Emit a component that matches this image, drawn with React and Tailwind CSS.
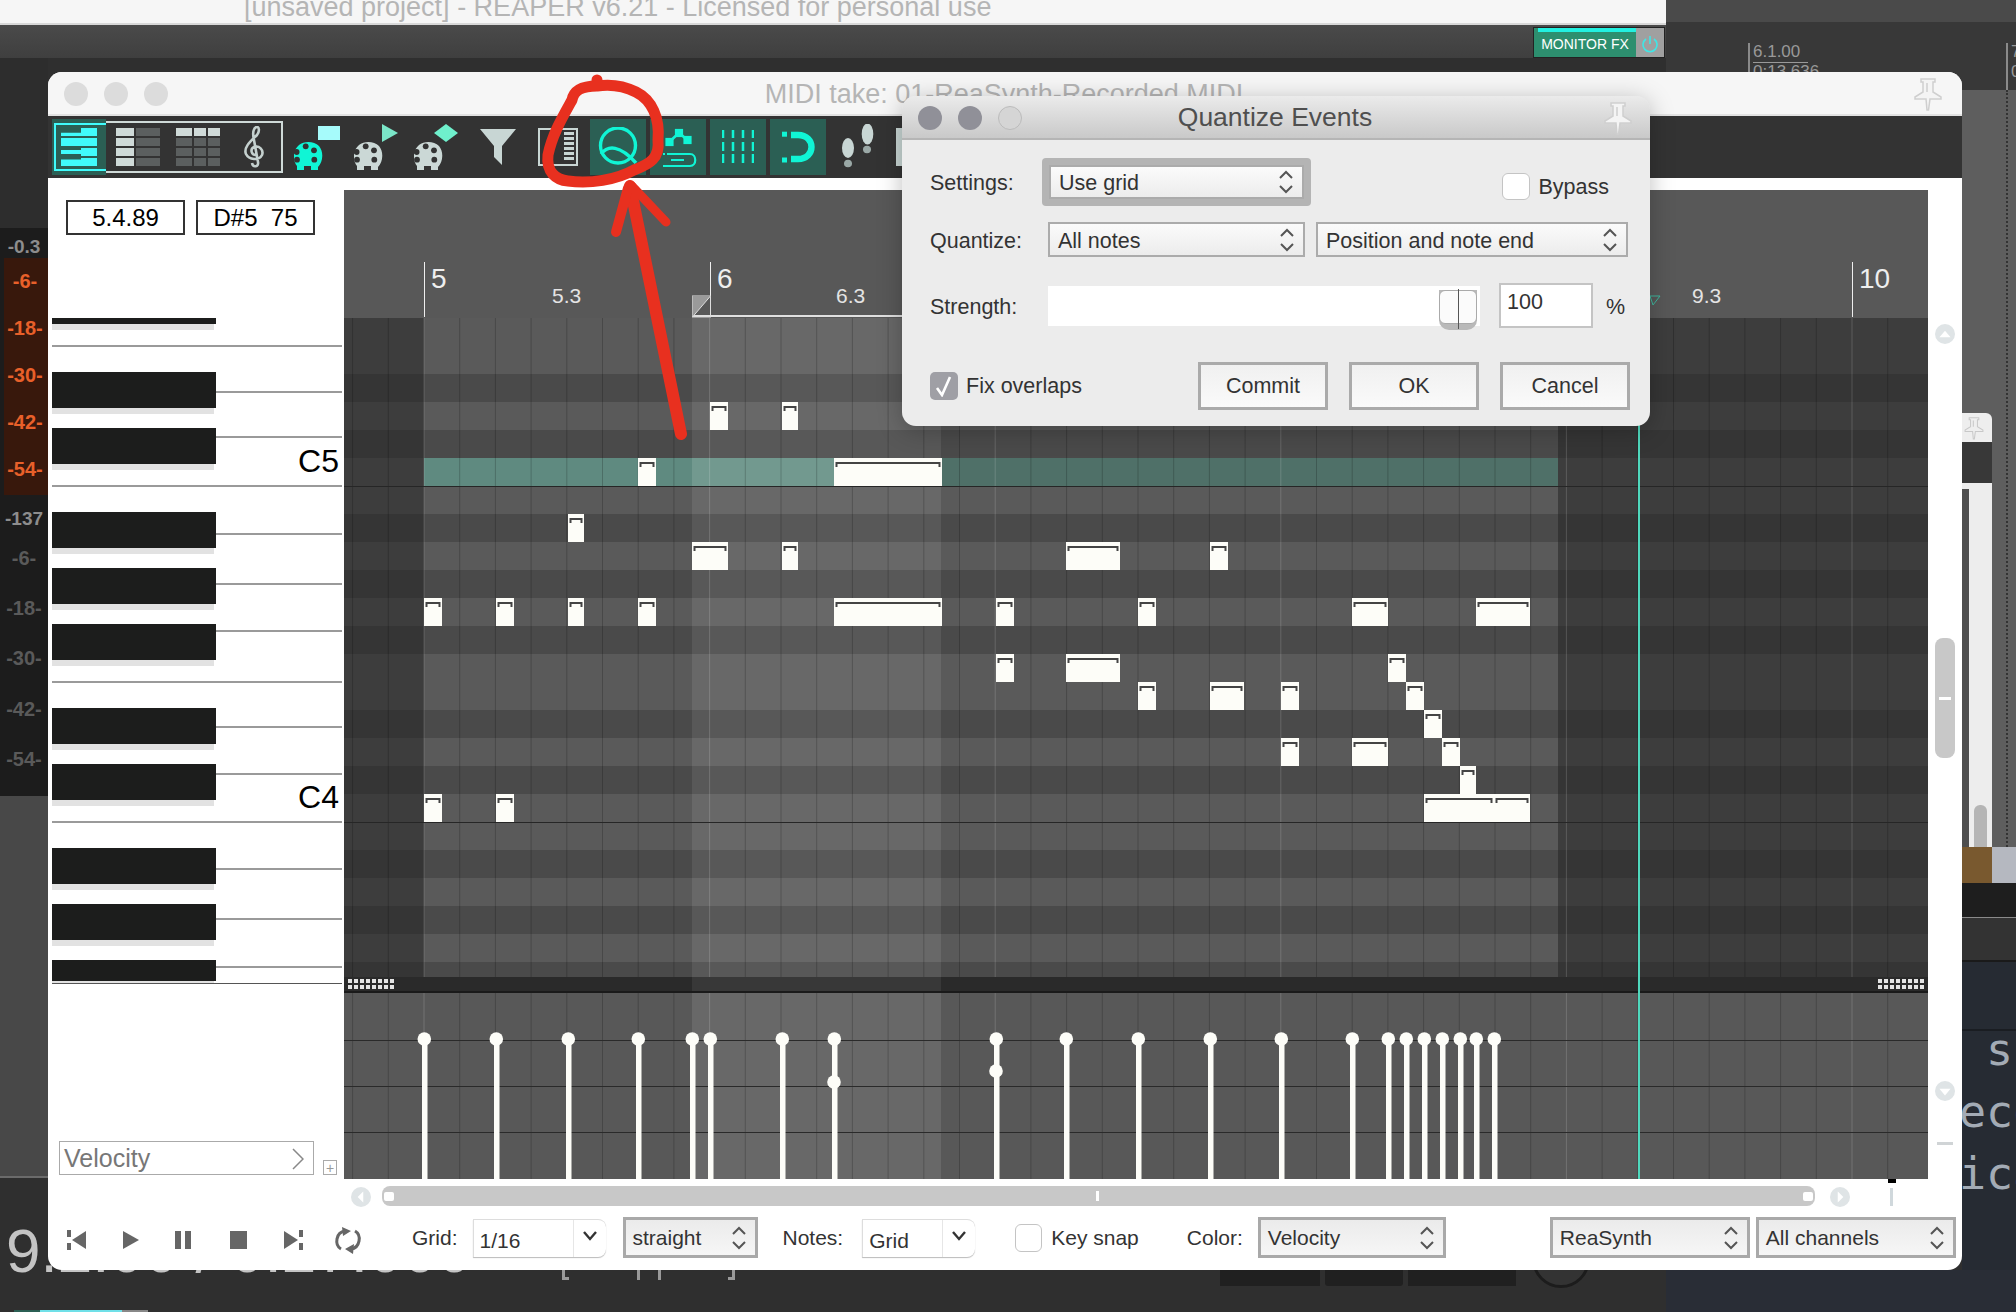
const CYAN = "#10f5d5";

// piano roll data, all in px inside the roll
const ROLL_W = 1584;
const GRID_H = 659;
const LANE_H = 186;
const X0 = 80; // bar 5
const STEP = 35.7;
const SEL_A = 348;
const SEL_B = 597;
const ITEM_END = 1214;
const DARK_ROWS = [374, 430, 514, 570, 626, 710, 766, 850, 906, 962];
const vLines = Array.from({ length: 44 }, (_, i) => X0 - 2 * STEP + i * STEP);

const NOTES = [
  [402, 710, 728], [402, 782, 798],
  [458, 638, 656], [458, 834, 942],
  [514, 568, 584],
  [542, 692, 728], [542, 782, 798], [542, 1066, 1120], [542, 1210, 1228],
  [598, 424, 442], [598, 496, 514], [598, 568, 584], [598, 638, 656], [598, 834, 942],
  [598, 996, 1014], [598, 1138, 1156], [598, 1352, 1388], [598, 1476, 1530],
  [654, 996, 1014], [654, 1066, 1120], [654, 1388, 1406],
  [682, 1138, 1156], [682, 1210, 1244], [682, 1281, 1299], [682, 1406, 1424],
  [710, 1424, 1442],
  [738, 1281, 1299], [738, 1352, 1388], [738, 1442, 1460],
  [766, 1460, 1476],
  [794, 424, 442], [794, 496, 514], [794, 1424, 1494], [794, 1494, 1530],
];

const STEMS = [424, 496, 568, 638, 692, 710, 782, 834, 996, 1066, 1138, 1210, 1281, 1352, 1388, 1406, 1424, 1442, 1460, 1476, 1494];

const BLACK_KEYS = [
  [318, 6], [372, 36], [428, 36], [512, 36], [568, 36], [624, 36], [708, 36], [764, 36], [848, 36], [904, 36], [960, 21],
];
const KEY_LINES = [
  [345, true], [391, false], [436, false], [485, true], [533, false], [583, false], [630, false],
  [681, true], [726, false], [773, false], [821, true], [868, false], [918, false], [966, false],
];

function Chevrons({ className = "" }) {
  return (
    <svg width="16" height="26" viewBox="0 0 16 26" className={className} fill="none" stroke="#555" strokeWidth="2">
      <path d="M2 9 L8 3 L14 9" />
      <path d="M2 17 L8 23 L14 17" />
    </svg>
  );
}

function Select({ label, className = "" }) {
  return (
    <div className={`flex items-center justify-between border-[2px] border-[#ababab] bg-gradient-to-b from-[#fbfbfb] to-[#ececec] text-[21.5px] text-[#333] pl-[8px] pr-[8px] ${className}`}>
      <span className="pt-[3px]">{label}</span>
      <Chevrons />
    </div>
  );
}

function BarSelect({ label, className = "" }) {
  return (
    <div className={`flex items-center justify-between border-[3px] border-[#a9a9a9] bg-gradient-to-b from-[#ebebeb] to-[#f6f6f6] text-[21px] text-[#333] pl-[7px] pr-[8px] ${className}`}>
      <span>{label}</span>
      <Chevrons />
    </div>
  );
}

function DialogButton({ children }) {
  return (
    <div className="w-[130px] h-[48px] flex items-center justify-center border-[3px] border-[#aaaaaa] bg-gradient-to-b from-[#f0f0f0] to-[#fafafa] text-[21.5px] text-[#333]">
      {children}
    </div>
  );
}

function Pin({ className = "", color = "#f4f4f4", edge = "#cfcfcf" }) {
  return (
    <svg width="32" height="34" viewBox="0 0 32 34" className={className} fill={color} stroke={edge} strokeWidth="1.5">
      <path d="M9 2 H23 V5 H21 V15 L29 20 V22 H18 L16.5 33 L15 33 L14 22 H3 V20 L11 15 V5 H9 Z" />
      <path d="M15 6 V15" fill="none" />
    </svg>
  );
}

function Combo({ label, className = "", sep }) {
  return (
    <div className={`flex h-[38px] border-l border-t border-[#dddddd] rounded-r-[8px] shadow-[0_1px_1px_#bbb] bg-white ${className}`}>
      <span className={`${sep} pl-[6px] pt-[7px] text-[21px] text-[#333] leading-[28px] border-r border-[#e6e6e6]`}>{label}</span>
      <div className="flex-1 flex items-center justify-center pb-[4px]">
        <svg width="16" height="10" viewBox="0 0 16 10" fill="none" stroke="#333" strokeWidth="2.4"><path d="M2 1 L8 8 L14 1" /></svg>
      </div>
    </div>
  );
}

// midi din plug with a little note mark on its top right
function MidiPlug({ color, mark }) {
  return (
    <svg width="46" height="46" viewBox="0 0 46 46">
      <path d="M3 46 V42 C-2 36 -1 26 5 21 C10 17 20 17 25 22 C30 28 29 38 24 43 V46 H17 V42 H10 V46 Z" fill={color} />
      {[[11.7, 22.3], [2.6, 28], [20, 26.3], [3, 35.7], [20.3, 35.7]].map(([x, y], i) => (
        <circle key={i} cx={x} cy={y} r="2.9" fill="#333" />
      ))}
      {mark}
    </svg>
  );
}

function Toolbar() {
  return (
    <div className="h-[62px] bg-[#333333] flex items-center relative">
      <div className="ml-[4px] w-[231px] h-[52px] border-[2px] border-[#cfdad8] flex items-stretch">
        <div className="w-[54px] -ml-[2px] -my-[4px] bg-[#2b5f54] flex items-center justify-center relative">
          <div className="absolute left-[2px] right-[0px] top-[4px] bottom-[4px] border-[2px] border-[#40fbfb] border-r-0" />
          <svg width="36" height="38" viewBox="0 0 36 38" fill="#40fbfb">
            <path d="M20 0 H36 V8 H0 V4.7 H20 Z" />
            <path d="M0 10 H36 V18 H0 Z" />
            <path d="M20 20 H36 V28 H20 V26 H0 V22 H20 Z" />
            <path d="M20 30 H36 V38 H0 V31.5 H20 Z" />
          </svg>
        </div>
        <svg width="60" height="38" viewBox="0 0 60 38" className="ml-[10px] mt-[5px]">
          {[0, 10, 20, 30].map((y) => (
            <g key={y}>
              <rect x="0" y={y} width="18" height="8" fill="#cfdad8" />
              <rect x="20" y={y} width="24" height="8" fill="#5b5f5f" />
            </g>
          ))}
        </svg>
        <svg width="46" height="38" viewBox="0 0 46 38" className="mt-[5px]">
          {[0, 10, 20, 30].map((y) => (
            <g key={y} fill={y === 0 ? "#cfdad8" : "#5b5f5f"}>
              <rect x="0" y={y} width="16" height="8" />
              <rect x="18" y={y} width="12" height="8" />
              <rect x="32" y={y} width="12" height="8" />
            </g>
          ))}
        </svg>
        <svg width="26" height="42" viewBox="0 0 26 42" className="ml-[20px] mt-[3px]" fill="none" stroke="#c4d0ce" strokeWidth="2.6">
          <path d="M14 29 C9 29 8 23 12 21 C17 19 22 24 20 29 C17 35 7 34 4 28 C1 21 10 14 15 9 C18 5 17 1 15 1 C12 1 10 6 12 14 L16 36 C17 41 11 42 10 37" />
        </svg>
      </div>
      <div className="ml-[11px]">
        <MidiPlug color="#10f5d5" mark={<rect x="24" y="2" width="22" height="14" fill="#a6fbfb" />} />
      </div>
      <div className="ml-[14px]">
        <MidiPlug color="#cbd8d6" mark={<path d="M28 0 L44 9 L28 18 Z" fill="#7be6c8" />} />
      </div>
      <div className="ml-[14px]">
        <MidiPlug color="#cbd8d6" mark={<path d="M32 0 L44 9 L32 18 L20 9 Z" fill="#6ff0cc" />} />
      </div>
      <svg width="36" height="36" viewBox="0 0 36 36" className="ml-[20px]" fill="#c8d6d4">
        <path d="M0 0 H36 L22 17 V36 L14 28 V17 Z" />
      </svg>
      <svg width="40" height="38" viewBox="0 0 40 38" className="ml-[22px]" fill="none">
        <rect x="1" y="1" width="38" height="36" stroke="#c8d6d4" strokeWidth="2" />
        {[4, 9, 14, 19, 24, 29].map((y) => <rect key={y} x="26" y={y} width="10" height="3" fill="#c8d6d4" />)}
      </svg>
      <div className="ml-[12px] w-[56px] h-[56px] bg-[#2b5f54] flex items-center justify-center">
        <svg width="44" height="40" viewBox="0 0 44 40" fill="none" stroke={CYAN} strokeWidth="3.4">
          <circle cx="22" cy="18.5" r="17.5" />
          <path d="M5 27 C12 18 24 18 40 36" />
        </svg>
      </div>
      <div className="ml-[4px] w-[56px] h-[56px] bg-[#2b5f54]">
        <svg width="56" height="56" viewBox="0 0 56 56" fill="none" stroke={CYAN} strokeWidth="2.2">
          <path d="M19.3 23 L29 13.7 L37.3 21" strokeWidth="2.6" />
          <rect x="16.5" y="20" width="6" height="6" fill={CYAN} />
          <rect x="26" y="11" width="6" height="6" fill={CYAN} />
          <rect x="34.5" y="18" width="6" height="6" fill={CYAN} />
          <path d="M17 35 H40 C47 35 47 47 40 47 H13" />
          <path d="M21 41 H34" />
          <path d="M13 35 H15" />
        </svg>
      </div>
      <div className="ml-[4px] w-[56px] h-[56px] bg-[#2b5f54] flex items-center justify-center">
        <svg width="32" height="36" viewBox="0 0 32 36" stroke={CYAN} strokeWidth="2.5">
          {[1, 11, 21, 31].map((x) => (
            <g key={x}>
              <path d={`M${x} 1 V9`} />
              <path d={`M${x} 13 V22`} />
              <path d={`M${x} 25 V34`} />
            </g>
          ))}
        </svg>
      </div>
      <div className="ml-[4px] w-[56px] h-[56px] bg-[#2b5f54]">
        <svg width="56" height="56" viewBox="0 0 56 56" fill="none" stroke={CYAN}>
          <path d="M21 16 H28 C46 16 46 40 28 40 H21" strokeWidth="6.4" />
          <rect x="12" y="12.7" width="5" height="5" fill={CYAN} stroke="none" />
          <rect x="12" y="38.5" width="5" height="5" fill={CYAN} stroke="none" />
        </svg>
      </div>
      <svg width="36" height="46" viewBox="0 0 36 46" className="ml-[14px]" fill="#c8d6d4">
        <ellipse cx="27.5" cy="10" rx="5.8" ry="10.5" />
        <ellipse cx="27" cy="25.5" rx="4" ry="3.7" fill="#9aa8a6" />
        <ellipse cx="8" cy="24" rx="6" ry="10" />
        <ellipse cx="8" cy="39.5" rx="4" ry="3.8" fill="#9aa8a6" />
      </svg>
      <div className="ml-[20px] w-[8px] h-[38px] bg-[#c8d6d4]" />
    </div>
  );
}

function Piano() {
  return (
    <div className="relative h-[666px] w-[296px] overflow-hidden">
      {KEY_LINES.map(([y, full]) => (
        <div
          key={y}
          className="absolute right-[2px] h-[2px] bg-[#9a9a9a]"
          style={{ top: y - 318, left: full ? 4 : 168 }}
        />
      ))}
      {BLACK_KEYS.map(([y, h]) => (
        <div key={y} className="absolute left-[4px] w-[164px]" style={{ top: y - 318, height: h + 6 }}>
          <div className="bg-[#1c1d1c]" style={{ height: h }} />
          <div className="h-[6px] w-[162px] bg-[#e2e2e2]" />
        </div>
      ))}
      <div className="absolute right-[2px] h-[2px] left-[4px] bg-[#555] top-[665px]" />
      <span className="absolute right-[5px] top-[125px] text-[32px] leading-[36px] text-black">C5</span>
      <span className="absolute right-[5px] top-[461px] text-[32px] leading-[36px] text-black">C4</span>
    </div>
  );
}

function Note({ y, x1, x2 }) {
  const x = x1 - 344;
  const w = x2 - x1;
  const top = y - 318;
  return (
    <g>
      <rect x={x} y={top} width={w} height={28} fill="#fdfdf8" />
      <path d={`M${x + 2.5} ${top + 9} V${top + 5} H${x + w - 2.5} V${top + 9}`} fill="none" stroke="#444" strokeWidth="2" />
    </g>
  );
}

function NoteGrid() {
  const rows = [];
  for (let y = 318; y < 977; y += 28) {
    const dark = DARK_ROWS.includes(y);
    const top = y - 318;
    rows.push(
      <g key={y}>
        <rect x="0" y={top} width={ROLL_W} height="28" fill={dark ? "#353535" : "#3d3d3d"} />
        <rect x={X0} y={top} width={ITEM_END - X0} height="28" fill={dark ? "#4a4a4a" : "#5a5a5a"} />
        <rect x={SEL_A} y={top} width={SEL_B - SEL_A} height="28" fill={dark ? "#585858" : "#686868"} />
      </g>
    );
  }
  return (
    <svg width={ROLL_W} height={GRID_H} className="block">
      {rows}
      <rect x={X0} y="140" width={SEL_A - X0} height="28" fill="#5f8a80" />
      <rect x={SEL_A} y="140" width={SEL_B - SEL_A} height="28" fill="#72998f" />
      <rect x={SEL_B} y="140" width={ITEM_END - SEL_B} height="28" fill="#4f7068" />
      {vLines.map((x, i) => (
        <line key={i} x1={x} x2={x} y1="0" y2={GRID_H} stroke={i % 8 === 2 ? "#ffffff" : "#000000"} strokeOpacity={i % 8 === 2 ? 0.16 : 0.2} />
      ))}
      <line x1="0" x2={ROLL_W} y1="168.5" y2="168.5" stroke="#262626" />
      <line x1="0" x2={ROLL_W} y1="504.5" y2="504.5" stroke="#262626" />
      {NOTES.map(([y, a, b], i) => <Note key={i} y={y} x1={a} x2={b} />)}
    </svg>
  );
}

function VelocityLane() {
  return (
    <svg width={ROLL_W} height={LANE_H} className="block">
      <rect width={ROLL_W} height={LANE_H} fill="#585858" />
      <rect x={SEL_A} width={SEL_B - SEL_A} height={LANE_H} fill="#686868" />
      {vLines.map((x, i) => (
        <line key={i} x1={x} x2={x} y1="0" y2={LANE_H} stroke={i % 8 === 2 ? "#ffffff" : "#000000"} strokeOpacity={i % 8 === 2 ? 0.16 : 0.2} />
      ))}
      {[47, 93, 139].map((y) => <line key={y} x1="0" x2={ROLL_W} y1={y + 0.5} y2={y + 0.5} stroke="#2a2a2a" />)}
      {STEMS.map((x) => (
        <g key={x} fill="#fdfdf8">
          <rect x={x - 344 - 2} y="46" width="5.5" height={LANE_H - 46} />
          <circle cx={x - 344 + 0.3} cy="46" r="6.8" />
        </g>
      ))}
      <circle cx={834 - 344} cy="89" r="6.8" fill="#fdfdf8" />
      <circle cx={996 - 344} cy="78" r="6.8" fill="#fdfdf8" />
    </svg>
  );
}

function GripDots({ className = "" }) {
  return (
    <div className={`grid grid-cols-8 gap-x-[2.4px] gap-y-[2px] w-[46px] ${className}`}>
      {Array.from({ length: 16 }, (_, i) => <div key={i} className="w-[4px] h-[4px] bg-[#e4e4e4]" />)}
    </div>
  );
}

function Roll() {
  return (
    <div className="relative w-[1584px]">
      <div className="relative h-[128px] bg-[#585858] text-white">
        {[[80, "5"], [366, "6"], [1508, "10"]].map(([x, t]) => (
          <div key={t} className="absolute top-[72px] bottom-[1px] w-px bg-[#eeeeee]" style={{ left: x }}>
            <span className="absolute left-[7px] top-[2px] text-[28px] leading-[30px] text-[#eeeeee]">{t}</span>
          </div>
        ))}
        {[[208, "5.3"], [492, "6.3"], [1348, "9.3"]].map(([x, t]) => (
          <span key={t} className="absolute top-[94px] text-[21px] leading-[24px] text-[#e4e4e4]" style={{ left: x }}>{t}</span>
        ))}
        <div className="absolute left-[348px] top-[125px] h-[2px] w-[400px] bg-[#e0e0e0]" />
        <svg width="20" height="24" viewBox="0 0 20 24" className="absolute left-[348px] top-[105px]">
          <rect x="0.5" y="1" width="18" height="21" fill="none" stroke="#dddddd" />
          <path d="M0.5 22 L18.5 1 H0.5 Z" fill="#9a9a9a" />
          <path d="M0.5 22 L18.5 1" stroke="#dddddd" />
        </svg>
        <svg width="12" height="12" viewBox="0 0 12 12" className="absolute left-[1305px] top-[105px]" fill="none" stroke="#3fb89f">
          <path d="M1 1 H11 L4 10 Z" />
        </svg>
      </div>
      <NoteGrid />
      <div className="h-[16px] flex bg-[#2a2a2a] border-b-[2px] border-[#1a1a1a] relative items-center justify-between px-[4px]">
        <div className="absolute left-[348px] w-[249px] top-0 bottom-0 bg-[#383838]" />
        <GripDots className="relative" />
        <GripDots className="relative" />
      </div>
      <VelocityLane />
      <div className="absolute left-[1294px] top-[128px] bottom-0 w-[2px] bg-[#4fd8bd]" />
    </div>
  );
}

function RoundGlyph({ dir }) {
  const p = { up: "M4 12 L9 6 L14 12 Z", down: "M4 7 L9 13 L14 7 Z", left: "M11 4 L6 9 L11 14 Z", right: "M7 4 L12 9 L7 14 Z" }[dir];
  return (
    <svg width="20" height="20" viewBox="0 0 18 18">
      <circle cx="9" cy="9" r="9" fill="#dfe4e6" />
      <path d={p} fill="#ffffff" />
    </svg>
  );
}

function VScroll() {
  return (
    <div className="w-[34px] flex flex-col items-center">
      <div className="mt-[146px]"><RoundGlyph dir="up" /></div>
      <div className="mt-[294px] w-[20px] h-[120px] rounded-[8px] bg-[#c8c8c8] flex items-center justify-center">
        <div className="w-[12px] h-[3px] bg-white" />
      </div>
      <div className="mt-[323px]"><RoundGlyph dir="down" /></div>
      <div className="mt-[41px] w-[16px] h-[3px] bg-[#d0d4d6]" />
    </div>
  );
}

function HScroll() {
  return (
    <div className="h-[36px] flex items-center relative">
      <div className="ml-[303px]"><RoundGlyph dir="left" /></div>
      <div className="ml-[11px] mb-[2px] w-[1433px] h-[20px] rounded-[8px] bg-[#c8c8c8] flex items-center justify-between px-[2px] relative">
        <div className="w-[10px] h-[9px] rounded-[2px] bg-white" />
        <div className="absolute left-[714px] w-[3px] h-[10px] bg-white" />
        <div className="w-[10px] h-[9px] rounded-[2px] bg-white" />
      </div>
      <div className="ml-[15px]"><RoundGlyph dir="right" /></div>
      <div className="ml-[40px] w-[3px] h-[18px] bg-[#d0d8dc]" />
      <div className="absolute left-[1840px] top-0 w-[8px] h-[4px] bg-black" />
    </div>
  );
}

function BottomBar() {
  const c = "#666666";
  return (
    <div className="h-[45px] flex items-center text-[21px] text-[#333]">
      <svg width="300" height="28" viewBox="0 0 300 28" className="ml-[16px] mt-[5px]" fill={c}>
        <path d="M3 4 H7 V11 H3 Z M3 17 H7 V24 H3 Z" />
        <path d="M8 14 L22 5 V23 Z" />
        <path d="M59 5 L75 14 L59 23 Z" />
        <rect x="111" y="5" width="6" height="18" />
        <rect x="121" y="5" width="6" height="18" />
        <rect x="166" y="5" width="17" height="18" />
        <path d="M220 5 L234 14 L220 23 Z" />
        <path d="M235 4 H239 V11 H235 Z M235 17 H239 V24 H235 Z" />
        <path d="M281 5 C272 6 270 19 277 23 M287 23 C296 22 298 9 291 5" fill="none" stroke={c} strokeWidth="3" />
        <path d="M278 1 L287 5 L279 10 Z M290 18 L281 23 L289 28 Z" />
      </svg>
      <span className="ml-[48px]">Grid:</span>
      <Combo label="1/16" sep="w-[100px]" className="ml-[15px] w-[133px]" />
      <BarSelect label="straight" className="ml-[17px] w-[135px] h-[41px]" />
      <span className="ml-[25px]">Notes:</span>
      <Combo label="Grid" sep="w-[80px]" className="ml-[19px] w-[113px]" />
      <div className="ml-[40px] w-[27px] h-[28px] rounded-[6px] border border-[#c4c4c4] bg-white" />
      <span className="ml-[9px]">Key snap</span>
      <span className="ml-[48px]">Color:</span>
      <BarSelect label="Velocity" className="ml-[15px] w-[188px] h-[41px]" />
      <BarSelect label="ReaSynth" className="ml-[104px] w-[200px] h-[41px]" />
      <BarSelect label="All channels" className="ml-[6px] w-[200px] h-[41px]" />
    </div>
  );
}

function MidiWindow() {
  return (
    <div className="absolute left-[48px] top-[72px] w-[1914px] h-[1198px] bg-white rounded-[14px] overflow-hidden flex flex-col">
      <div className="h-[44px] pt-[2px] bg-[#f6f6f6] border-b-[2px] border-[#e2e2e2] flex items-center relative">
        <div className="flex gap-[16px] ml-[16px]">
          <div className="w-[24px] h-[24px] rounded-full bg-[#dcdcdc]" />
          <div className="w-[24px] h-[24px] rounded-full bg-[#dcdcdc]" />
          <div className="w-[24px] h-[24px] rounded-full bg-[#dcdcdc]" />
        </div>
        <div className="flex-1 text-center text-[27px] text-[#b5b5b5] -ml-[72px]">MIDI take: 01-ReaSynth-Recorded MIDI</div>
        <Pin className="mr-[18px]" />
      </div>
      <Toolbar />
      <div className="flex h-[1001px]">
        <div className="w-[296px] flex flex-col">
          <div className="flex gap-[11px] ml-[18px] mt-[22px] h-[118px]">
            <div className="w-[119px] h-[35px] border-[2px] border-[#333] flex items-center justify-center text-[24px] text-black">5.4.89</div>
            <div className="w-[119px] h-[35px] border-[2px] border-[#333] flex items-center justify-center text-[24px] text-black whitespace-pre">D#5  75</div>
          </div>
          <Piano />
          <div className="flex items-end ml-[11px] mt-[157px]">
            <div className="w-[255px] h-[34px] border border-[#aaaaaa] flex items-center justify-between pl-[4px] pr-[4px] pt-[2px] text-[25px] text-[#777]">
              <span>Velocity</span>
              <svg width="12" height="22" viewBox="0 0 12 22" fill="none" stroke="#888" strokeWidth="1.5" className="mr-[5px]"><path d="M1 1 L11 11 L1 21" /></svg>
            </div>
            <div className="ml-[9px] w-[14px] h-[15px] border border-[#aaa] flex items-center justify-center text-[14px] leading-none text-[#999]">+</div>
          </div>
        </div>
        <div className="pt-[12px]"><Roll /></div>
        <VScroll />
      </div>
      <HScroll />
      <BottomBar />
    </div>
  );
}

function QuantizeDialog() {
  return (
    <div className="absolute left-[902px] top-[96px] w-[748px] h-[330px] bg-[#ececec] rounded-[14px] overflow-hidden shadow-[0_4px_24px_rgba(0,0,0,0.25)] text-[21.5px] text-[#333]">
      <div className="h-[44px] pt-[2px] bg-gradient-to-b from-[#ebebeb] to-[#c9c9c9] border-b-[2px] border-[#b5b5b5] flex items-center relative">
        <div className="flex gap-[16px] ml-[16px]">
          <div className="w-[24px] h-[24px] rounded-full bg-[#909098]" />
          <div className="w-[24px] h-[24px] rounded-full bg-[#909098]" />
          <div className="w-[24px] h-[24px] rounded-full bg-[#d5d5d5] border border-[#bbb]" />
        </div>
        <div className="flex-1 text-center text-[26.5px] text-[#4f4f4f] -ml-[74px]">Quantize Events</div>
        <Pin className="mr-[16px]" />
      </div>
      <div className="pl-[28px]">
        <div className="mt-[18px] h-[48px] flex items-center">
          <span className="w-[112px] pt-[3px]">Settings:</span>
          <div className="w-[269px] h-[48px] p-[7px] rounded-[4px] bg-[#b4b4b4]">
            <Select label="Use grid" className="h-full" />
          </div>
          <div className="ml-auto mr-[41px] mt-[8px] flex items-center">
            <div className="w-[28px] h-[27px] rounded-[6px] border border-[#c4c4c4] bg-white" />
            <span className="ml-[8px] pt-[3px]">Bypass</span>
          </div>
        </div>
        <div className="mt-[16px] h-[35px] flex items-center">
          <span className="w-[118px] pt-[3px]">Quantize:</span>
          <Select label="All notes" className="w-[257px] h-[35px]" />
          <Select label="Position and note end" className="ml-[11px] w-[312px] h-[35px]" />
        </div>
        <div className="mt-[26px] h-[45px] flex items-center">
          <span className="w-[118px] pt-[3px]">Strength:</span>
          <div className="w-[432px] h-[40px] bg-white relative">
            <div className="absolute right-[3px] top-[4px] w-[38px] h-[40px] rounded-b-[10px] bg-[#b9b9b9]">
              <div className="h-[34px] rounded-[6px] border border-[#aaa] bg-[#fbfbfb] relative">
                <div className="absolute left-[18px] -top-[2px] h-[40px] w-px bg-[#555]" />
              </div>
            </div>
          </div>
          <div className="ml-[19px] w-[94px] h-[45px] bg-white border-[2px] border-[#c4c4c4] pl-[6px] leading-[34px]">100</div>
          <span className="ml-[13px] pt-[3px]">%</span>
        </div>
        <div className="mt-[34px] h-[48px] flex items-center pr-[20px]">
          <div className="w-[28px] h-[28px] rounded-[5px] bg-[#9f9fa5] flex items-center justify-center">
            <svg width="20" height="22" viewBox="0 0 20 22" fill="none" stroke="#fff" strokeWidth="2.6"><path d="M3 13 L8 20 L16 2" /></svg>
          </div>
          <span className="ml-[8px] pt-[1px]">Fix overlaps</span>
          <div className="ml-auto flex gap-[21px]">
            <DialogButton>Commit</DialogButton>
            <DialogButton>OK</DialogButton>
            <DialogButton>Cancel</DialogButton>
          </div>
        </div>
      </div>
    </div>
  );
}

function Backdrop() {
  return (
    <>
      {/* main reaper window behind the midi editor */}
      <div className="absolute left-0 top-0 w-[1666px] h-[25px] bg-[#f6f6f6] border-b-[2px] border-[#d8d8d8] overflow-hidden pl-[244px] text-[27px] leading-[14px] text-[#b5b5b5]">
        [unsaved project] - REAPER v6.21 - Licensed for personal use
      </div>
      <div className="absolute left-0 top-[25px] w-[1666px] h-[33px] bg-gradient-to-b from-[#4a4a4a] to-[#3f3f3f]" />
      <div className="absolute left-[1533px] top-[27px] w-[132px] h-[31px] bg-[#222] p-[1px] flex">
        <div className="flex-1 bg-[#2d8f6f] relative flex items-center justify-center pt-[3px] text-[14px] text-white">
          <div className="absolute left-[4px] right-[-4px] top-0 h-[4px] bg-[#22f0e0]" />
          MONITOR FX
        </div>
        <div className="w-[28px] bg-[#a0a0a0] flex items-center justify-center pt-[3px] relative">
          <svg width="16" height="18" viewBox="0 0 16 18" fill="none" stroke="#3fe6e6" strokeWidth="1.6">
            <path d="M8 1 V9" />
            <path d="M4 4 A7 7 0 1 0 12 4" />
          </svg>
        </div>
      </div>
      <div className="absolute left-[1666px] top-0 w-[350px] h-[22px] bg-[#4a4a4a]" />
      <div className="absolute left-[1666px] top-[22px] w-[350px] h-[68px] bg-[#383838]" />
      <div className="absolute left-[1748px] top-[43px] h-[47px] w-[2px] bg-[#8a8a8a]" />
      <div className="absolute left-[1753px] top-[42px] text-[17px] leading-[20px] text-[#999] border-b border-[#999] pr-[8px]">6.1.00</div>
      <div className="absolute left-[1753px] top-[62px] text-[17px] leading-[20px] text-[#999]">0:13.636</div>
      <div className="absolute left-[2006px] top-[43px] h-[47px] w-[2px] bg-[#8a8a8a]" />
      <div className="absolute left-[2011px] top-[42px] text-[17px] leading-[20px] text-[#999]">7</div>
      <div className="absolute left-[2011px] top-[62px] text-[17px] leading-[20px] text-[#999]">0</div>

      {/* arrange view on the right, with another editor window peeking out */}
      <div className="absolute left-[1962px] top-[90px] w-[54px] h-[757px] bg-[#5e5e5e] flex">
        <div className="w-[30px] mt-[323px] flex flex-col">
          <div className="h-[29px] bg-[#eeeeee] rounded-tr-[6px] flex justify-center items-center">
            <Pin className="w-[22px] h-[24px] -ml-[6px]" color="#eeeeee" edge="#c8c8c8" />
          </div>
          <div className="h-[41px] bg-[#383838]" />
          <div className="flex-1 flex bg-[#ededed]">
            <div className="w-[7px] mt-[6px] bg-[#4e4e4e]" />
            <div className="flex-1 flex items-end justify-center">
              <div className="w-[13px] h-[42px] rounded-t-[6px] bg-[#b5b5b5]" />
            </div>
          </div>
        </div>
        <div className="ml-[14px] w-px border-l-[2px] border-dotted border-[#333]" />
      </div>
      <div className="absolute left-[1962px] top-[847px] w-[54px] h-[36px] flex">
        <div className="w-[30px] bg-[#79592f]" />
        <div className="flex-1 bg-[#b5b8c0]" />
      </div>
      <div className="absolute left-[1962px] top-[883px] w-[54px] h-[34px] bg-[#1e1e1e]" />
      <div className="absolute left-[1962px] top-[917px] w-[54px] h-[45px] bg-[#333] border-t border-[#8a8a8a] border-b-[2px] border-b-[#1a1a1a]" />
      <div className="absolute left-[1962px] top-[962px] w-[54px] h-[350px] bg-[#262b33]" />
      <div className="absolute left-[1962px] top-[1029px] w-[54px] h-[2px] bg-[#1a1d22]" />
      <div className="absolute left-[1959px] top-[1019px] w-[57px] h-[240px] overflow-hidden font-['DejaVu_Sans_Mono',monospace] text-[45px] leading-[62px] text-[#a3abb5] whitespace-pre">
        <div> s</div>
        <div>eco</div>
        <div>ica</div>
      </div>

      {/* left meters */}
      <div className="absolute left-0 top-[58px] w-[48px] h-[170px] bg-[#2d2d2d]" />
      <div className="absolute left-0 top-[228px] w-[48px] h-[568px] bg-[#1c1c1c] text-center font-bold text-[20px] leading-[20px]">
        <div className="h-[30px] flex items-center justify-center text-[#8d8d8d] pt-[8px] text-[19px]">-0.3</div>
        <div className="ml-[4px] h-[237px] bg-[#38180c] text-[#e8602a] -indent-[2px]">
          {["-6-", "-18-", "-30-", "-42-", "-54-"].map((t) => (
            <div key={t} className="h-[46.8px] flex items-center justify-center">{t}</div>
          ))}
        </div>
        <div className="h-[38px] flex items-end justify-center text-[#8d8d8d] pb-[4px] text-[19px]">-137</div>
        {["-6-", "-18-", "-30-", "-42-", "-54-"].map((t) => (
          <div key={t} className="h-[50.2px] flex items-center justify-center text-[#5a5a5a]">{t}</div>
        ))}
      </div>
      <div className="absolute left-0 top-[796px] w-[48px] h-[380px] bg-[#484848]" />
      <div className="absolute left-0 top-[1176px] w-[48px] h-[2px] bg-[#6b6b6b]" />

      {/* transport stuff poking out below the window */}
      <div className="absolute left-[6px] top-[1220px] text-[62px] leading-[62px] text-[#c4c4c4] whitespace-pre">9.2.00 / 0:27.000</div>
      <div className="absolute left-[562px] top-[1262px] w-[173px] h-[18px] flex justify-between text-[#999]">
        <div className="w-[7px] border-l-[3px] border-b-[3px] border-[#999]" />
        <div className="flex gap-[18px]">
          <div className="w-[3px] bg-[#999]" />
          <div className="w-[3px] bg-[#999]" />
        </div>
        <div className="w-[7px] border-r-[3px] border-b-[3px] border-[#999]" />
      </div>
      <div className="absolute left-[1220px] top-[1262px] w-[100px] h-[24px] bg-[#202020]" />
      <div className="absolute left-[1325px] top-[1262px] w-[78px] h-[24px] rounded-[3px] bg-[#202020]" />
      <div className="absolute left-[1408px] top-[1262px] w-[108px] h-[24px] bg-[#202020]" />
      <div className="absolute left-[1532px] top-[1230px] w-[58px] h-[58px] rounded-full border-[3px] border-[#1c1c1c] bg-[#333]" />
      <div className="absolute left-[1666px] top-[1270px] w-[350px] h-[42px] bg-[#292d36]" />
      <div className="absolute left-[14px] top-[1310px] w-[134px] h-[2px] flex bg-[#111]">
        <div className="w-[26px] bg-[#2b5f54]" />
        <div className="w-[82px] bg-[#70e0e8]" />
        <div className="flex-1 bg-[#888]" />
      </div>
    </>
  );
}

function RedScribble() {
  return (
    <svg width="2016" height="1312" viewBox="0 0 2016 1312" className="absolute left-0 top-0 pointer-events-none" fill="none" stroke="#e8301f" strokeLinecap="round" strokeLinejoin="round">
      <path
        d="M597 80 L597 86 C582 86 574 90 572 100 C562 118 552 135 548 155 C546 172 556 180 568 181 C590 184 616 180 634 170 C650 164 660 158 658 140 C660 118 652 100 636 92 C624 86 610 84 597 86"
        strokeWidth="11"
      />
      <path d="M630 186 L681 434" strokeWidth="12" />
      <path d="M628 188 L616 232" strokeWidth="10" />
      <path d="M632 186 L666 222" strokeWidth="9" />
    </svg>
  );
}

export default function App() {
  return (
    <div className="relative w-[2016px] h-[1312px] overflow-hidden bg-[#2f2f2f] font-['Liberation_Sans',sans-serif]">
      <Backdrop />
      <MidiWindow />
      <QuantizeDialog />
      <RedScribble />
    </div>
  );
}
